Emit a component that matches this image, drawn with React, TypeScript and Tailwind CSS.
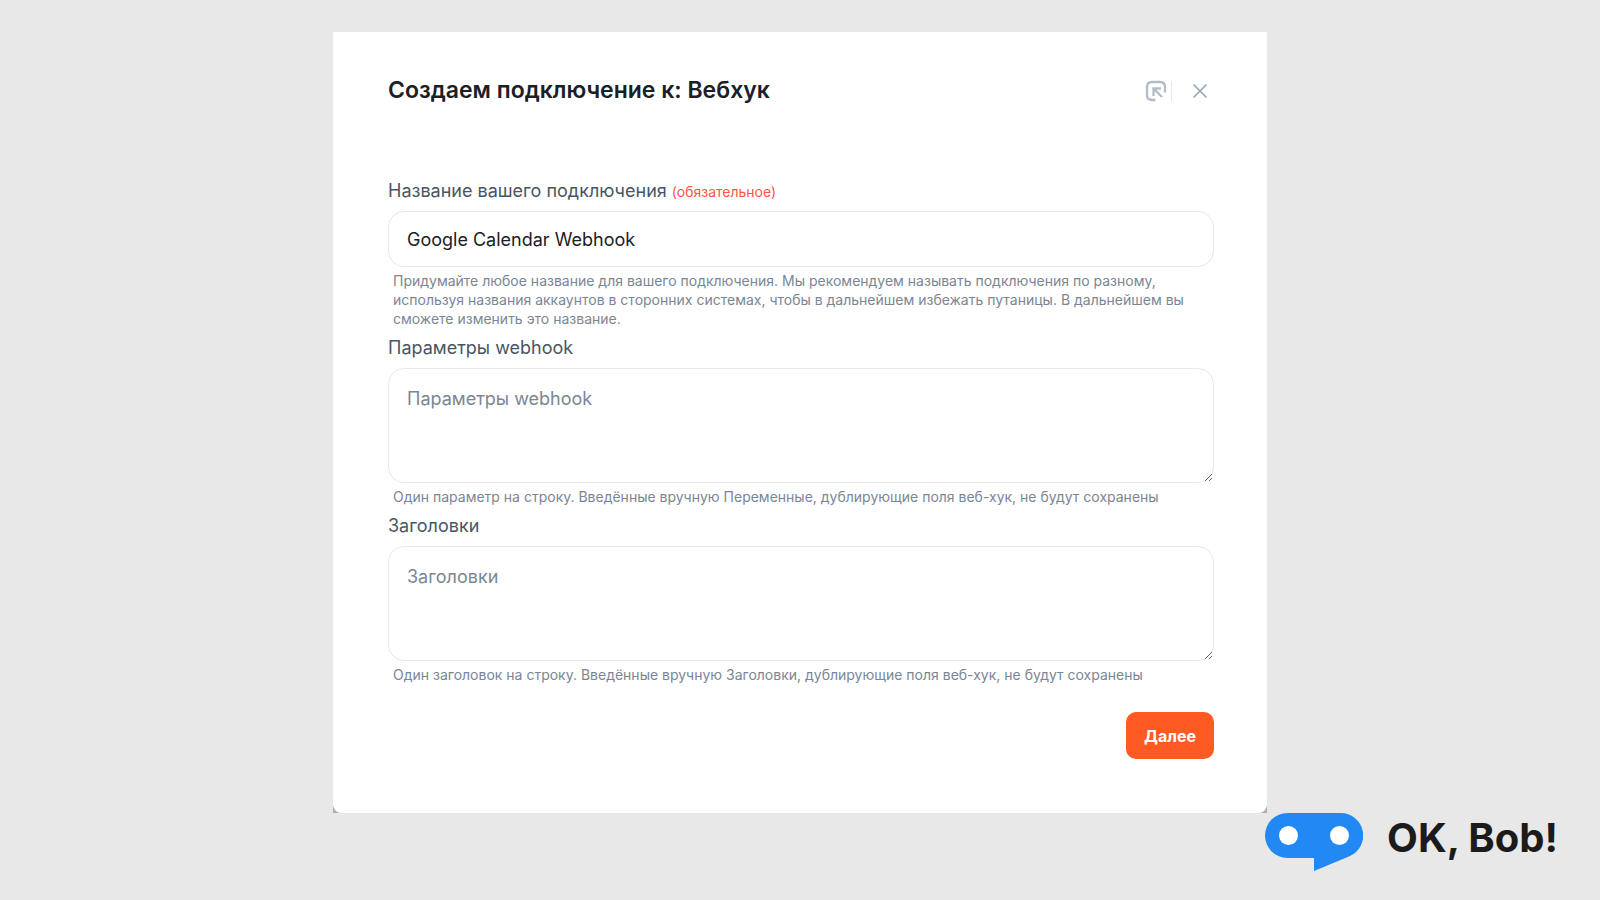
import { X } from "lucide-react";

function OpenIcon() {
    return (
        <svg width="22" height="22" viewBox="0 0 22 22" fill="none" stroke="currentColor" strokeWidth="2.3">
            <path d="M20 12.5V7Q20 2 15 2H7Q2 2 2 7v8q0 5 5 5h3.5" />
            <path d="M8.5 16V8.5H16M8.5 8.5l8.5 8.5" />
        </svg>
    );
}

function BobLogo() {
    return (
        <svg width="98" height="58" viewBox="0 0 98 58" className="shrink-0">
            <path d="M22.5 0h53a22.5 22.5 0 0 1 9 43.2L49 58V45H22.5a22.5 22.5 0 0 1 0-45z" fill="#2188f4" />
            <circle cx="23.5" cy="22.5" r="9.5" fill="#fff" />
            <circle cx="74.5" cy="22.5" r="9.5" fill="#fff" />
        </svg>
    );
}

function Corner({ className }: { className: string }) {
    return (
        <svg width="8" height="8" viewBox="0 0 8 8" className={`absolute bottom-0 ${className}`}>
            <path d="M0 0Q1 7 8 8H0z" fill="#adadad" />
        </svg>
    );
}

const labelClass = "block text-lg leading-7 text-[#495564]";
const fieldClass =
    "block w-full rounded-2xl border border-[#e5e8ed] bg-white px-[18px] text-lg leading-7 text-[#1b2026] placeholder:text-[#7b8694] outline-none";
const hintClass = "mt-1 px-[5px] text-sm leading-[19px] text-[#7b8694]";

function TextareaField({ id, label, hint }: { id: string; label: string; hint: string }) {
    return (
        <div>
            <label htmlFor={id} className={labelClass}>
                {label}
            </label>
            <textarea id={id} placeholder={label} className={`${fieldClass} mt-1.5 h-[115px] py-4`} />
            <p className={hintClass}>{hint}</p>
        </div>
    );
}

export default function App() {
    return (
        <main className="min-h-screen bg-[#e8e8e8] pt-8 font-['Inter',sans-serif]">
            <section className="relative mx-auto max-w-[934px] bg-white pt-11 pr-[53px] pb-[54px] pl-[55px]">
                <header className="flex items-center justify-between pr-0.5">
                    <h1 className="text-[23px] leading-7 font-semibold text-[#1b2026]">Создаем подключение к: Вебхук</h1>
                    <div className="flex items-center pt-0.5 text-[#b3bdc8]">
                        <button type="button" aria-label="Открыть" className="mr-1">
                            <OpenIcon />
                        </button>
                        <span className="mr-4 h-5 w-px bg-[#e5e8ed]" />
                        <button type="button" aria-label="Закрыть" className="text-[#9aa8b7]">
                            <X size={24} strokeWidth={1.75} />
                        </button>
                    </div>
                </header>

                <form className="mt-[73px] flex flex-col gap-1.5">
                    <div>
                        <label htmlFor="name" className={labelClass}>
                            Название вашего подключения <span className="text-sm text-[#ff5449]">(обязательное)</span>
                        </label>
                        <input
                            id="name"
                            type="text"
                            defaultValue="Google Calendar Webhook"
                            className={`${fieldClass} mt-1.5 h-14`}
                        />
                        <p className={hintClass}>
                            Придумайте любое название для вашего подключения. Мы рекомендуем называть подключения по
                            разному, используя названия аккаунтов в сторонних системах, чтобы в дальнейшем избежать
                            путаницы. В дальнейшем вы сможете изменить это название.
                        </p>
                    </div>

                    <TextareaField
                        id="params"
                        label="Параметры webhook"
                        hint="Один параметр на строку. Введённые вручную Переменные, дублирующие поля веб-хук, не будут сохранены"
                    />
                    <TextareaField
                        id="headers"
                        label="Заголовки"
                        hint="Один заголовок на строку. Введённые вручную Заголовки, дублирующие поля веб-хук, не будут сохранены"
                    />

                    <button
                        type="submit"
                        className="mt-[22px] h-[47px] self-end rounded-[10px] bg-[#ff5a23] px-[18px] text-base font-bold text-white"
                    >
                        Далее
                    </button>
                </form>

                <Corner className="left-0" />
                <Corner className="right-0 -scale-x-100" />
            </section>

            <footer className="flex items-start justify-end gap-6 pr-[42px]">
                <BobLogo />
                <span className="text-[40px] leading-[50px] font-bold text-[#1b1b1b]">OK, Bob!</span>
            </footer>
        </main>
    );
}
